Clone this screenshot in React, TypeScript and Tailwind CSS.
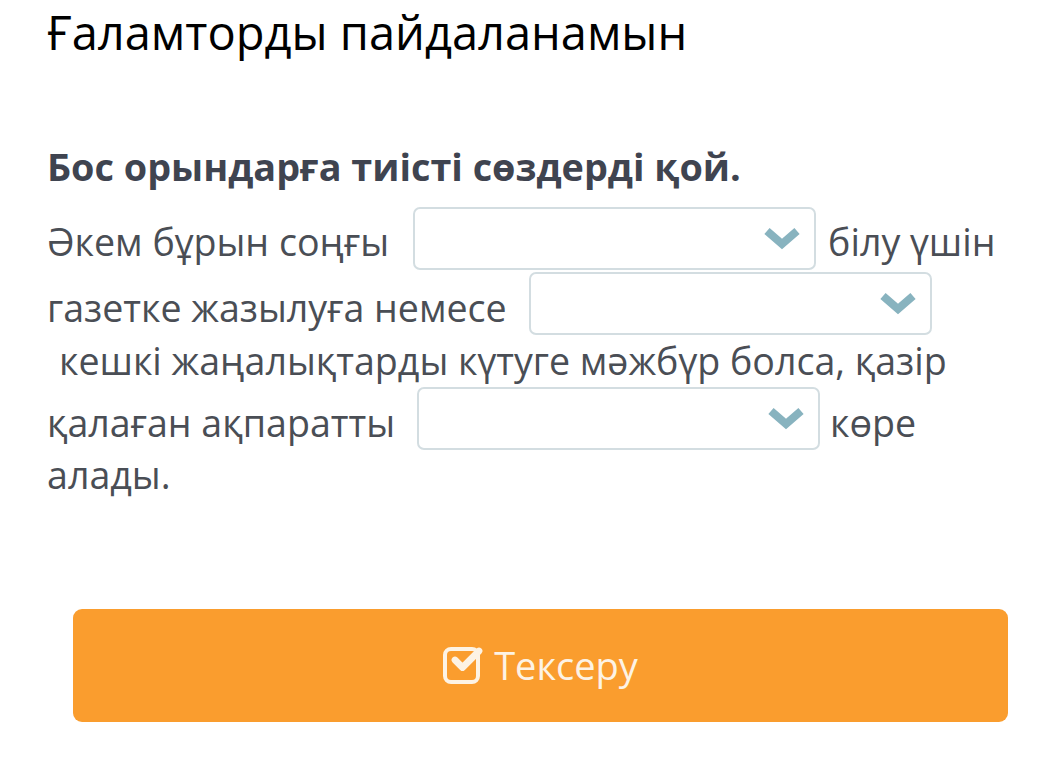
import React from 'react';
import { Check } from 'lucide-react';

function Blank() {
  return (
    <div className="h-[63px] w-[403px] shrink-0 rounded-[7px] border-2 border-[#d3dde1] bg-white flex items-center justify-end pr-[13px]">
      <svg width="38" height="26" viewBox="0 0 38 26" fill="none">
        <path d="M4 5 L19 18 L34 5" stroke="#88b3bf" strokeWidth="8" strokeLinecap="butt" strokeLinejoin="miter" />
      </svg>
    </div>
  );
}

export default function App() {
  return (
    <div className="min-h-screen bg-white font-['Open_Sans',sans-serif] relative overflow-hidden">
      <div className="pl-[47px] pr-[20px]">
        <h1 className="text-[47px] leading-[62px] text-black font-normal pt-[1px]">Ғаламторды пайдаланамын</h1>

        <p className="mt-[82px] text-[37.8px] leading-[44px] font-bold text-[#3f4450]">Бос орындарға тиісті сөздерді қой.</p>

        <div className="mt-[18px] text-[37.6px] text-[#4a4e55]">
          <div className="flex items-center h-[63px]">
            <span className="pt-[8px]">Әкем бұрын соңғы</span>
            <div className="ml-[24px] mr-[12px]"><Blank /></div>
            <span className="pt-[8px]">білу үшін</span>
          </div>
          <div className="flex items-center h-[63px] mt-[2px]">
            <span className="pt-[10px]">газетке жазылуға немесе</span>
            <div className="ml-[22px]"><Blank /></div>
          </div>
          <div className="h-[52px] flex items-center pl-[12px]">
            <span>кешкі жаңалықтарды күтуге мәжбүр болса, қазір</span>
          </div>
          <div className="flex items-center h-[63px]">
            <span className="pt-[10px]">қалаған ақпаратты</span>
            <div className="ml-[22px] mr-[10px]"><Blank /></div>
            <span className="pt-[10px]">көре</span>
          </div>
          <div className="h-[50px] flex items-center">
            <span>алады.</span>
          </div>
        </div>
      </div>

      <div className="pl-[73px] pr-[38px] mt-[109px]">
        <button className="w-full h-[113px] rounded-[9px] bg-[#fa9d2e] flex items-center justify-center gap-[14px] text-[#fdf3e4] text-[38px]">
          <span className="relative inline-flex items-center justify-center w-[37px] h-[37px] rounded-[8px] border-[4px] border-[#fdf3e4]">
            <Check className="absolute w-[36px] h-[36px] -top-[9px] left-[2px]" strokeWidth={4.5} />
          </span>
          <span>Тексеру</span>
        </button>
      </div>
    </div>
  );
}
